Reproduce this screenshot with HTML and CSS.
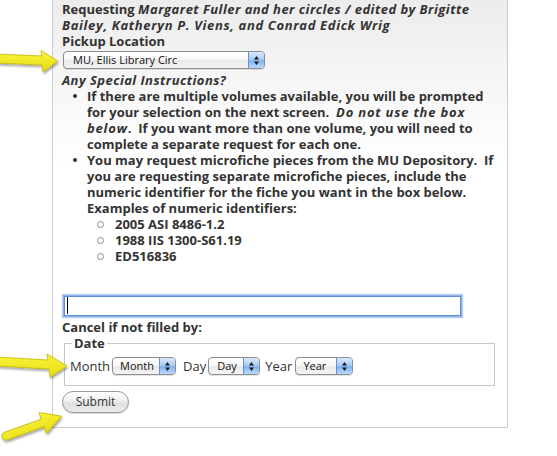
FILE: index.html
```html
<!DOCTYPE html>
<html lang="en">
<head>
<meta charset="utf-8">
<title>Request</title>
<link rel="stylesheet" href="styles.css">
</head>
<body>
<div class="page">
  <form class="panel">
    <div class="title">Requesting <i>Margaret Fuller and her circles / edited by Brigitte<br><span class="wide">Bailey, Katheryn P. Viens, and Conrad Edick Wrig</span></i></div>
    <label class="lbl" for="loc">Pickup Location</label>
    <span class="sel sel-loc">
      <select id="loc"><option>MU, Ellis Library Circ</option></select>
      <span class="sel-btn"><svg width="7" height="11" viewBox="0 0 7 11"><polygon points="3.5,1 6,4.5 1,4.5"/><polygon points="1,6.5 6,6.5 3.5,10"/></svg></span>
    </span>
    <div class="instr"><i>Any Special Instructions?</i></div>
    <ul class="notes">
      <li>If there are multiple volumes available, you will be prompted<br>for your selection on the next screen.&nbsp; <i class="em">Do not use the box<br>below</i>.&nbsp; If you want more than one volume, you will need to<br>complete a separate request for each one.</li>
      <li>You may request microfiche pieces from the MU Depository.&nbsp; If<br>you are requesting separate microfiche pieces, include the<br>numeric identifier for the fiche you want in the box below.<br>Examples of numeric identifiers:
        <ul class="examples">
          <li>2005 ASI 8486-1.2</li>
          <li>1988 IIS 1300-S61.19</li>
          <li>ED516836</li>
        </ul>
      </li>
    </ul>
    <div class="field"><input type="text" class="txt" aria-label="Special instructions"></div>
    <div class="lbl">Cancel if not filled by:</div>
    <fieldset class="date">
      <legend>Date</legend>
      <div class="date-row">
        <span class="dlabel">Month</span>
        <span class="sel sel-month">
          <select aria-label="Month"><option>Month</option></select>
          <span class="sel-btn"><svg width="7" height="11" viewBox="0 0 7 11"><polygon points="3.5,1 6,4.5 1,4.5"/><polygon points="1,6.5 6,6.5 3.5,10"/></svg></span>
        </span>
        <span class="dlabel">Day</span>
        <span class="sel sel-day">
          <select aria-label="Day"><option>Day</option></select>
          <span class="sel-btn"><svg width="7" height="11" viewBox="0 0 7 11"><polygon points="3.5,1 6,4.5 1,4.5"/><polygon points="1,6.5 6,6.5 3.5,10"/></svg></span>
        </span>
        <span class="dlabel dlabel-year">Year</span>
        <span class="sel sel-year">
          <select aria-label="Year"><option>Year</option></select>
          <span class="sel-btn"><svg width="7" height="11" viewBox="0 0 7 11"><polygon points="3.5,1 6,4.5 1,4.5"/><polygon points="1,6.5 6,6.5 3.5,10"/></svg></span>
        </span>
      </div>
    </fieldset>
    <button type="button" class="submit">Submit</button>
  </form>
  <svg class="arrows" width="557" height="456" viewBox="0 0 557 456" aria-hidden="true">
    <defs>
      <linearGradient id="yl" x1="0" y1="0" x2="0" y2="1">
        <stop offset="0" stop-color="#fbf53a"/>
        <stop offset="1" stop-color="#e6dc14"/>
      </linearGradient>
      <filter id="sh" x="-20%" y="-30%" width="150%" height="180%">
        <feDropShadow dx="1" dy="2" stdDeviation="1.3" flood-color="#000" flood-opacity="0.35"/>
      </filter>
    </defs>
    <g fill="url(#yl)" stroke="#c2b60e" stroke-width="0.8" stroke-linejoin="round" filter="url(#sh)">
      <polygon points="-3,54 42,56 41,50.5 57.5,61 43,72 42,65 -3,63"/>
      <polygon points="-3,357 48,360 47,354 67,366 50,377 49,369 -3,366"/>
      <path d="M0,-4 L39,-4 L39,-11 L59,0 L39,11 L39,4 L0,4 A4,4 0 0 1 0,-4 Z" transform="translate(6,436) rotate(-19.6)"/>
    </g>
  </svg>
</div>
</body>
</html>
```

FILE: styles.css
```css
* { box-sizing: border-box; }
html, body { margin: 0; padding: 0; background: #fff; }
body {
  font-family: "Open Sans", "DejaVu Sans", sans-serif;
  color: #333;
}
.page {
  position: relative;
  width: 557px;
  height: 456px;
  overflow: hidden;
}
.panel {
  display: block;
  margin-left: 52px;
  width: 456px;
  border: 1px solid #cbcbcb;
  border-top: 0;
  padding: 1px 10px 14px 9px;
  background: linear-gradient(#ececec 0, #f7f7f7 90px, #ffffff 170px);
  font-size: 13px;
  line-height: 16px;
  font-weight: 700;
}
.panel i { letter-spacing: 0.45px; }
.panel .wide { letter-spacing: 0.65px; }
.panel .em { letter-spacing: 0.8px; }
.title, .lbl, .instr { display: block; }
.sel {
  display: flex;
  height: 18px;
  border: 1px solid #8d8d8d;
  border-radius: 4px;
  overflow: hidden;
  background: linear-gradient(#ffffff 0, #f6f6f6 50%, #e9e9e9 51%, #f3f3f3 100%);
  box-shadow: 0 1px 1px rgba(0,0,0,0.12);
}
.sel select {
  flex: 1;
  min-width: 0;
  height: 16px;
  border: 0;
  margin: 0;
  padding: 0 0 0 9px;
  background: transparent;
  -webkit-appearance: none;
  appearance: none;
  font: 400 11px/16px "Open Sans", "DejaVu Sans", sans-serif;
  color: #111;
  outline: none;
}
.sel-btn {
  width: 16px;
  flex: none;
  display: flex;
  align-items: center;
  justify-content: center;
  border-left: 1px solid #6b8fcf;
  background: linear-gradient(#d9eafd 0, #a9cdf7 45%, #7fb3f1 55%, #b9dafc 100%);
}
.sel-btn svg { display: block; fill: #1a1a1a; }
.sel-loc { width: 202px; margin: 2px 0 0 1px; }
.instr { margin-top: 3px; }
.notes {
  margin: 0;
  padding-left: 25px;
  list-style: none;
}
.notes > li::before {
  content: "";
  display: inline-block;
  width: 4px;
  height: 4px;
  border-radius: 50%;
  background: #333;
  margin-left: -14px;
  margin-right: 10px;
  vertical-align: 3px;
}
.examples {
  margin: 0;
  padding-left: 26px;
  list-style: none;
}
.examples > li::before {
  content: "";
  display: inline-block;
  width: 5px;
  height: 5px;
  border: 1px solid #8a8a8a;
  border-radius: 50%;
  margin-left: -16px;
  margin-right: 11px;
  vertical-align: 1px;
}
.field {
  position: relative;
  margin-top: 32px;
  margin-left: 2px;
  width: 397px;
}
.field::after {
  content: "";
  position: absolute;
  left: 3px;
  top: 1px;
  width: 1px;
  height: 17px;
  background: #000;
}
.txt {
  display: block;
  width: 397px;
  height: 20px;
  margin: 0;
  border: 1px solid #5e8fd7;
  padding: 0 3px;
  background: #fff;
  box-shadow: 0 0 0 1px #8fb4ea, 0 0 1px 2px rgba(130,170,230,0.6);
  outline: none;
  font: 400 12px "Open Sans", sans-serif;
}
.field + .lbl { margin-top: 3px; }
.date {
  margin: 0 2px;
  padding: 6px 5px 10px 5px;
  border: 1px solid #c8c8c8;
  min-width: 0;
}
.date legend {
  padding: 0 2px;
  margin-left: 2px;
  line-height: 16px;
}
.date-row {
  display: flex;
  align-items: center;
  height: 18px;
  font-weight: 400;
}
.dlabel { margin-right: 2px; }
.dlabel-year { margin-right: 3px; }
.sel-month { width: 64px; margin-right: 7px; }
.sel-day { width: 52px; margin-right: 5px; }
.sel-year { width: 58px; }
.sel-month select { padding-left: 7px; }
.sel-day select { padding-left: 8px; }
.sel-year select { padding-left: 7px; }
.submit {
  display: block;
  margin: 5px 0 0 0;
  width: 67px;
  height: 22px;
  padding: 0;
  border: 1px solid #9a9a9a;
  border-radius: 11px;
  background: linear-gradient(#ffffff 0, #f0f0f0 45%, #e0e0e0 55%, #ececec 100%);
  box-shadow: 0 1px 1px rgba(0,0,0,0.15);
  font: 400 12px/20px "Open Sans", "DejaVu Sans", sans-serif;
  color: #333;
}
.arrows {
  position: absolute;
  left: 0;
  top: 0;
  pointer-events: none;
}
```
